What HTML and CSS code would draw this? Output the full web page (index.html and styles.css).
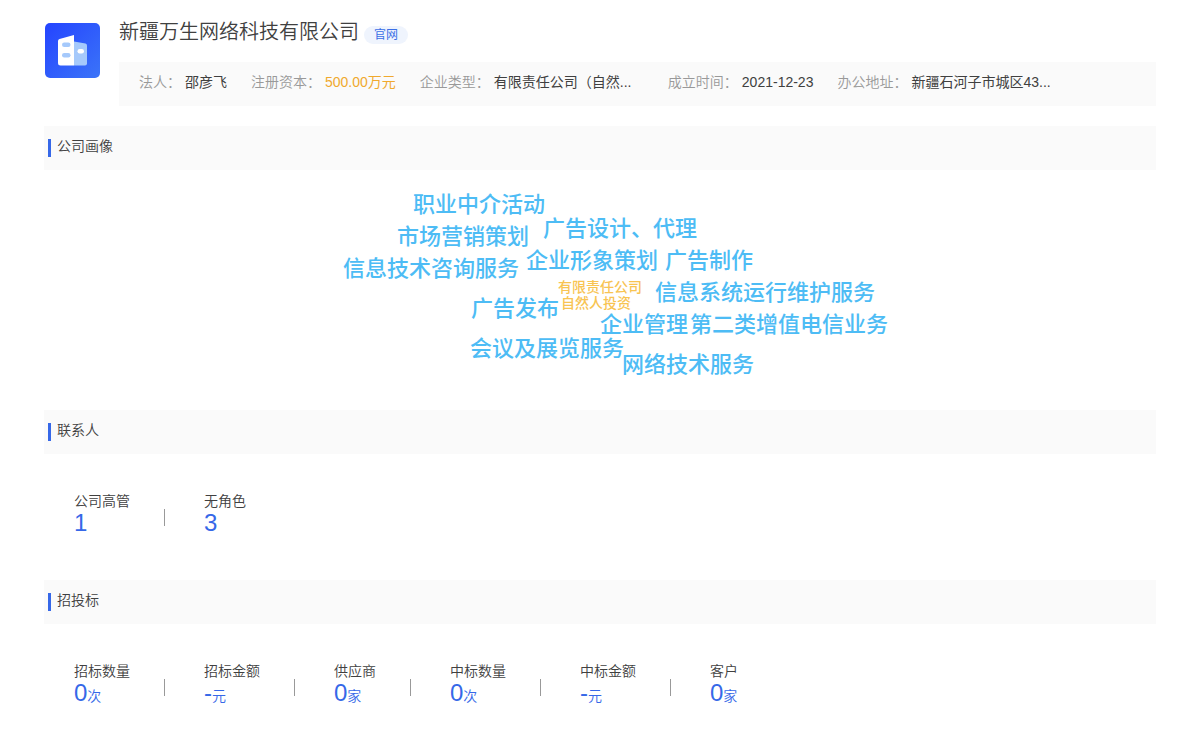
FILE: index.html
```html
<!DOCTYPE html>
<html lang="zh-CN">
<head>
<meta charset="utf-8">
<meta name="viewport" content="width=device-width, initial-scale=1">
<title>新疆万生网络科技有限公司</title>
<link rel="stylesheet" href="styles.css">
</head>
<body>
<main class="page">
  <header class="company">
    <svg class="logo" viewBox="0 0 55 55" aria-hidden="true">
      <defs>
        <linearGradient id="logo-bg" x1="0" y1="0" x2="1" y2="1">
          <stop offset="0" stop-color="#2444ff"/>
          <stop offset="1" stop-color="#3b74f8"/>
        </linearGradient>
      </defs>
      <rect width="55" height="55" rx="5" fill="url(#logo-bg)"/>
      <path d="M29 18.500L40.500 20.500Q42 21 42 22.500V40.500Q42 42.500 40 42.500H29Z" fill="#a5c9fb"/>
      <path d="M14.500 16L29 12V42.500H15.500Q13 42.500 13 40V18Q13 16.500 14.500 16Z" fill="#fff"/>
      <rect x="17" y="19.500" width="8.500" height="4.500" rx="2.200" fill="#a5c9fb"/>
      <rect x="17" y="30" width="8.500" height="4.500" rx="2.200" fill="#a5c9fb"/>
      <rect x="32.500" y="26" width="6.500" height="4.500" rx="2.200" fill="#fff"/>
    </svg>
    <div class="company-body">
      <div class="title-row">
        <h1 class="company-name">新疆万生网络科技有限公司</h1>
        <a class="site-link" href="#">官网</a>
      </div>
      <dl class="facts">
        <div class="fact"><dt>法人：</dt><dd>邵彦飞</dd></div>
        <div class="fact"><dt>注册资本：</dt><dd class="money">500.00万元</dd></div>
        <div class="fact"><dt>企业类型：</dt><dd class="clip">有限责任公司（自然...</dd></div>
        <div class="fact"><dt>成立时间：</dt><dd>2021-12-23</dd></div>
        <div class="fact"><dt>办公地址：</dt><dd class="clip">新疆石河子市城区43...</dd></div>
      </dl>
    </div>
  </header>

  <section>
    <h2 class="section-title">公司画像</h2>
    <div class="cloud">
      <span class="word" style="left:133px;top:19px">职业中介活动</span>
      <span class="word" style="left:263px;top:43px">广告设计、代理</span>
      <span class="word" style="left:117px;top:51px">市场营销策划</span>
      <span class="word" style="left:246px;top:75px">企业形象策划</span>
      <span class="word" style="left:385px;top:75px">广告制作</span>
      <span class="word" style="left:63px;top:83px">信息技术咨询服务</span>
      <span class="word minor" style="left:278px;top:107px">有限责任公司</span>
      <span class="word minor" style="left:281px;top:123px">自然人投资</span>
      <span class="word" style="left:375px;top:107px">信息系统运行维护服务</span>
      <span class="word" style="left:191px;top:123px">广告发布</span>
      <span class="word" style="left:320px;top:139px">企业管理</span>
      <span class="word" style="left:410px;top:139px">第二类增值电信业务</span>
      <span class="word" style="left:190px;top:163px">会议及展览服务</span>
      <span class="word" style="left:342px;top:179px">网络技术服务</span>
    </div>
  </section>

  <section>
    <h2 class="section-title">联系人</h2>
    <dl class="stats">
      <div class="stat"><dt>公司高管</dt><dd>1</dd></div>
      <div class="stat"><dt>无角色</dt><dd>3</dd></div>
    </dl>
  </section>

  <section>
    <h2 class="section-title">招投标</h2>
    <dl class="stats">
      <div class="stat"><dt>招标数量</dt><dd>0<small>次</small></dd></div>
      <div class="stat"><dt>招标金额</dt><dd>-<small>元</small></dd></div>
      <div class="stat"><dt>供应商</dt><dd>0<small>家</small></dd></div>
      <div class="stat"><dt>中标数量</dt><dd>0<small>次</small></dd></div>
      <div class="stat"><dt>中标金额</dt><dd>-<small>元</small></dd></div>
      <div class="stat"><dt>客户</dt><dd>0<small>家</small></dd></div>
    </dl>
  </section>
</main>
</body>
</html>
```
FILE: styles.css
```css
* {
  box-sizing: border-box;
}

body {
  margin: 0;
  background: #fff;
  color: #404040;
  font-family: "Liberation Sans", "Noto Sans CJK SC", sans-serif;
  font-size: 14px;
  line-height: 20px;
}

h1, h2, dl, dd {
  margin: 0;
  font-weight: 350;
}

.page {
  padding: 16px 44px 0;
}

.company {
  display: flex;
  gap: 19px;
  padding-left: 1px;
  margin-bottom: 20px;
}

.logo {
  flex: none;
  width: 55px;
  height: 55px;
  margin-top: 7px;
}

.company-body {
  flex: 1;
  min-width: 0;
}

.title-row {
  display: flex;
  align-items: flex-start;
  gap: 5px;
  margin-bottom: 14px;
}

.company-name {
  font-size: 20px;
  line-height: 32px;
}

.site-link {
  margin-top: 10px;
  padding: 0 10px;
  border-radius: 9px;
  background: #eff4fd;
  color: #3b6fe6;
  font-size: 12px;
  line-height: 18px;
  text-decoration: none;
}

.facts {
  display: flex;
  flex-wrap: wrap;
  gap: 0 24px;
  padding: 10px 20px 14px;
  background: #fafafa;
}

.fact {
  display: flex;
  gap: 4px;
}

.fact dt {
  color: #999;
  font-weight: 350;
}

.fact dd {
  font-weight: 400;
}

.fact .money {
  color: #f0a92e;
}

.fact .clip {
  width: 150px;
  overflow: hidden;
  text-overflow: ellipsis;
  white-space: nowrap;
}

.section-title {
  display: flex;
  gap: 6px;
  padding: 10px 4px 13px;
  background: #fafafa;
  font-size: 14px;
  line-height: 21px;
}

.section-title::before {
  content: "";
  width: 3px;
  height: 18px;
  margin-top: 3px;
  background: #3668e8;
}

/* Word positions are offsets on this free canvas. */
.cloud {
  position: relative;
  width: 640px;
  height: 240px;
  margin: 0 auto;
}

.word {
  position: absolute;
  color: #4dbcf5;
  font-size: 22px;
  font-weight: 500;
  line-height: 32px;
  white-space: nowrap;
}

.word.minor {
  color: #f8c453;
  font-size: 14px;
  line-height: 20px;
}

.stats {
  display: flex;
  flex-wrap: wrap;
  padding: 37px 30px 45px;
}

.stat {
  display: flex;
  flex-direction: column;
  position: relative;
  margin-right: 74px;
}

.stat dt {
  font-weight: 350;
  line-height: 20px;
}

.stat dd {
  color: #3668e8;
  font-size: 24px;
  font-weight: 400;
  line-height: 24px;
}

.stat small {
  font-size: 14px;
  font-weight: 350;
}

.stat:not(:last-child)::after {
  content: "";
  position: absolute;
  top: 18px;
  right: -35px;
  width: 1px;
  height: 17px;
  background: #999;
}
```
